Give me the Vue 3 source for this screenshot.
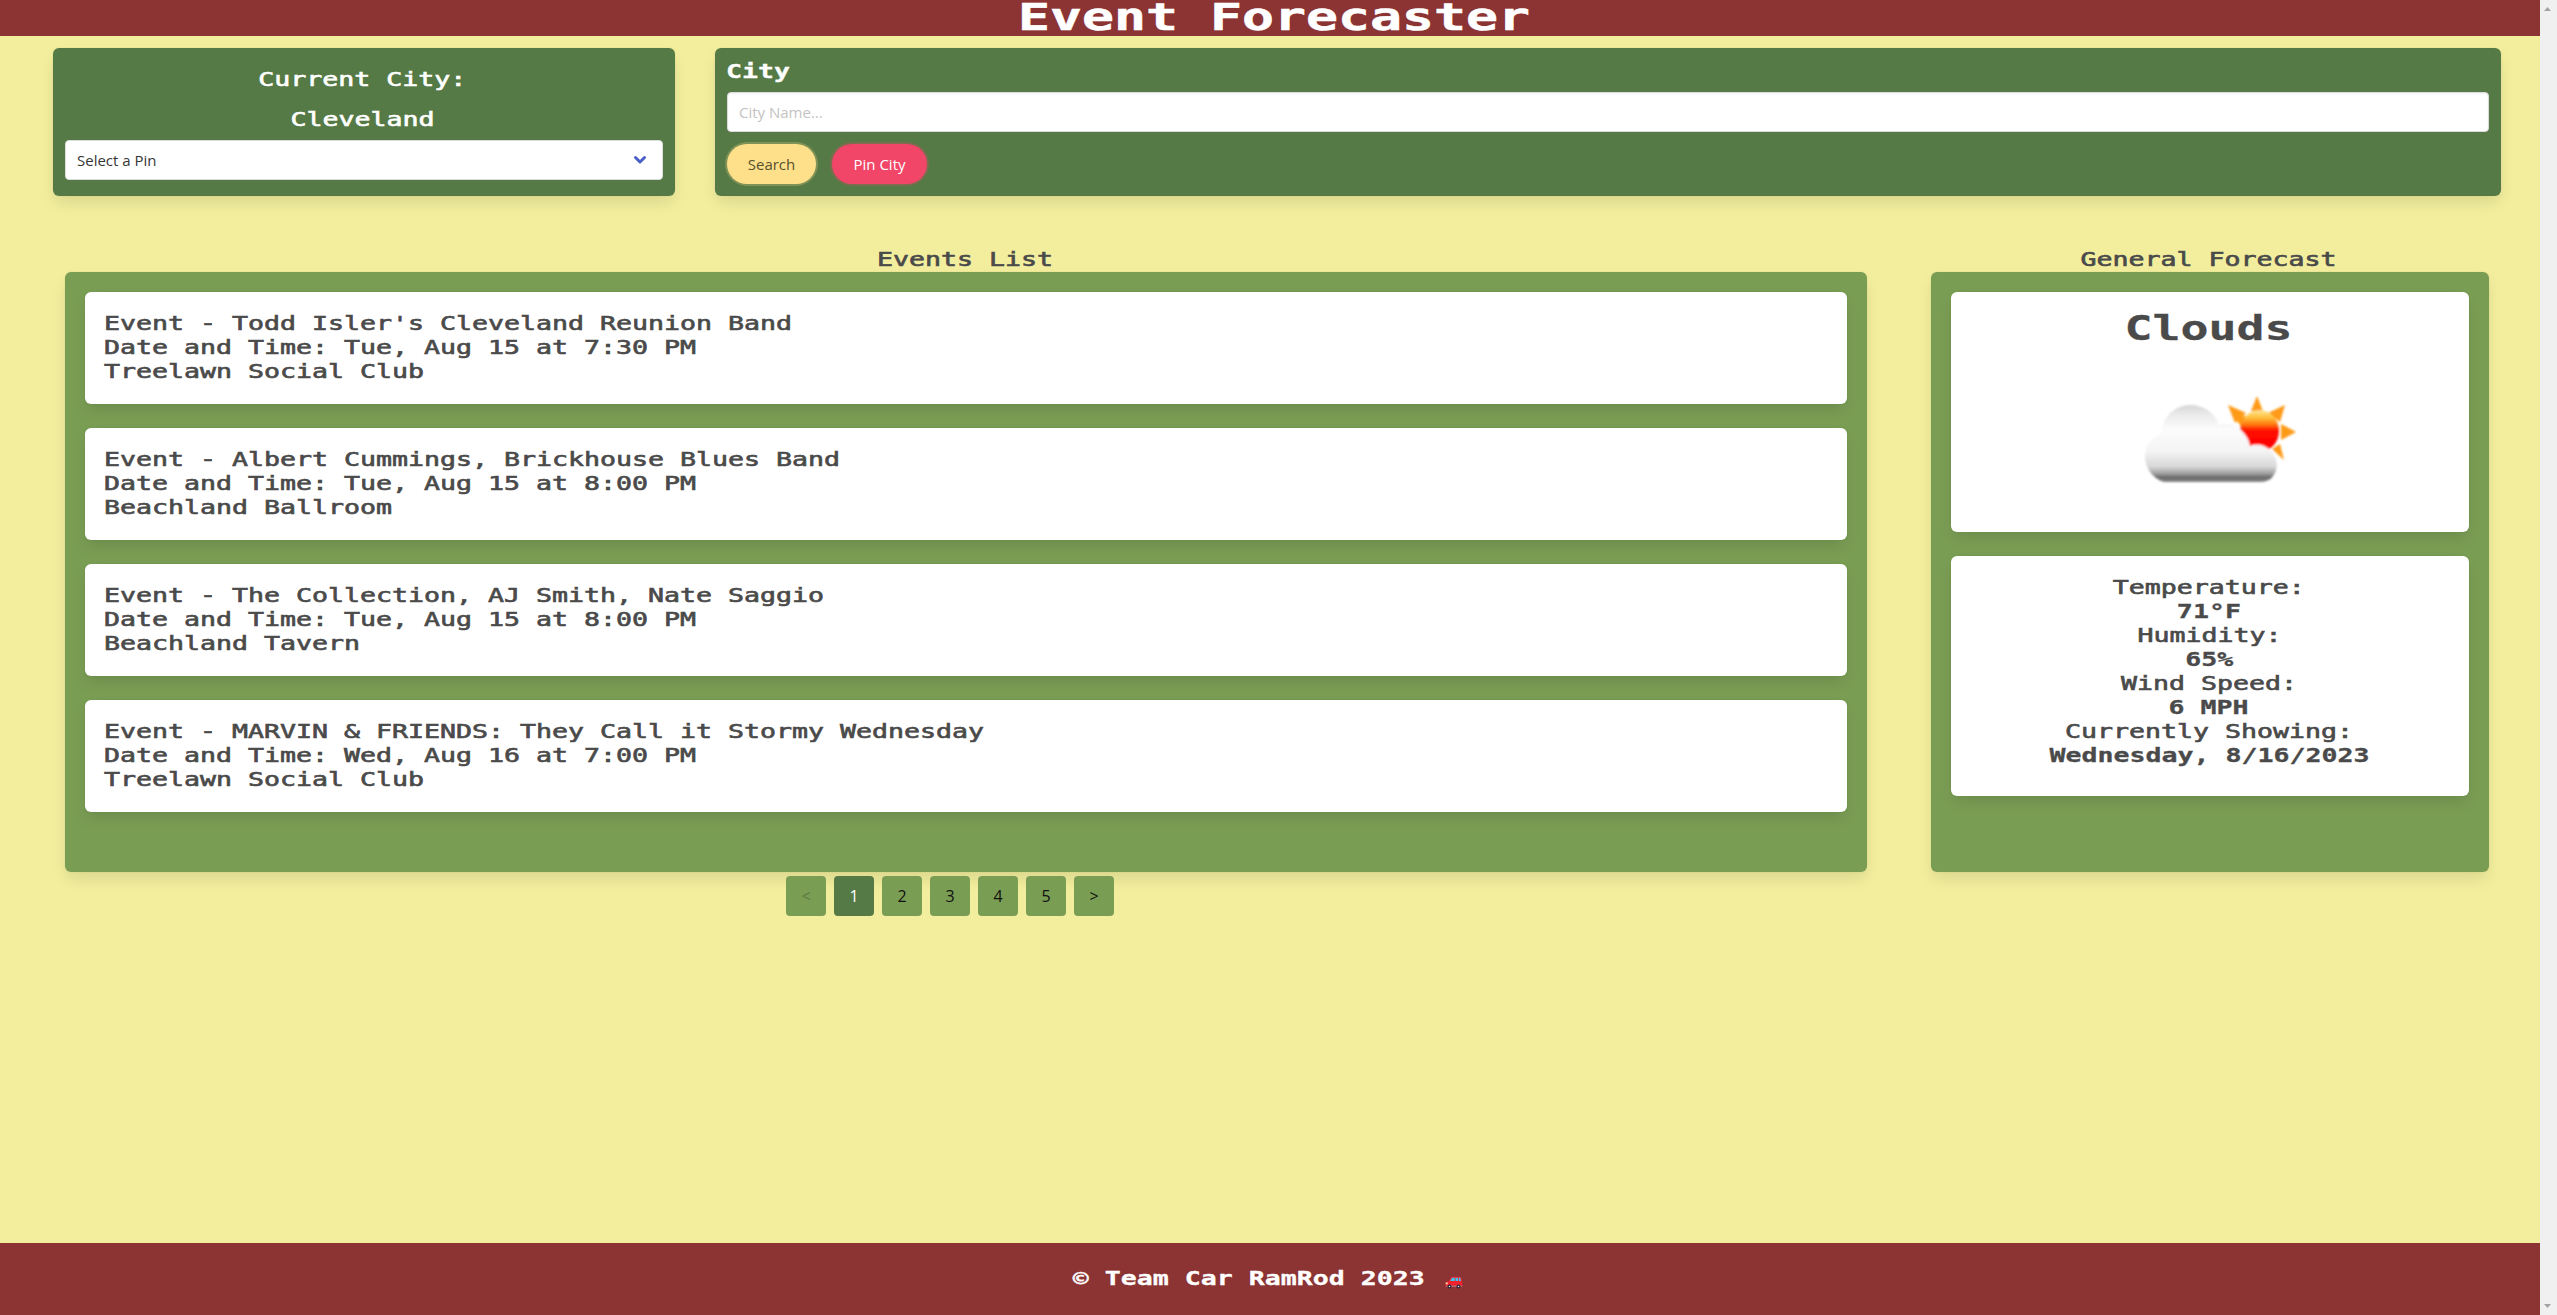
<script setup>
const events = [
  { name: "Todd Isler's Cleveland Reunion Band", time: 'Tue, Aug 15 at 7:30 PM', venue: 'Treelawn Social Club' },
  { name: 'Albert Cummings, Brickhouse Blues Band', time: 'Tue, Aug 15 at 8:00 PM', venue: 'Beachland Ballroom' },
  { name: 'The Collection, AJ Smith, Nate Saggio', time: 'Tue, Aug 15 at 8:00 PM', venue: 'Beachland Tavern' },
  { name: 'MARVIN & FRIENDS: They Call it Stormy Wednesday', time: 'Wed, Aug 16 at 7:00 PM', venue: 'Treelawn Social Club' },
]
const forecast = [
  { label: 'Temperature:', value: '71°F' },
  { label: 'Humidity:', value: '65%' },
  { label: 'Wind Speed:', value: '6 MPH' },
  { label: 'Currently Showing:', value: 'Wednesday, 8/16/2023' },
]
const pages = ['<', '1', '2', '3', '4', '5', '>']
</script>

<template>
  <div class="window">
    <div class="page">
      <header class="masthead"><h1 class="px title">Event Forecaster</h1></header>

      <section class="controls">
        <div class="panel current">
          <p class="px">Current City:</p>
          <p class="px">Cleveland</p>
          <div class="select">
            <span>Select a Pin</span>
            <svg width="14" height="10" viewBox="0 0 14 10"><path d="M2.5 2.5 L7 7 L11.5 2.5" fill="none" stroke="#485fc7" stroke-width="3" stroke-linecap="round" stroke-linejoin="round" /></svg>
          </div>
        </div>
        <div class="panel search">
          <label class="px left bold">City</label>
          <div class="input">City Name...</div>
          <div class="buttons">
            <button class="warning">Search</button>
            <button class="danger">Pin City</button>
          </div>
        </div>
      </section>

      <main class="content">
        <section class="events">
          <h2 class="px">Events List</h2>
          <div class="board">
            <article v-for="e in events" :key="e.name" class="card event">
              <p class="px left">Event - {{ e.name }}</p>
              <p class="px left">Date and Time: {{ e.time }}</p>
              <p class="px left">{{ e.venue }}</p>
            </article>
          </div>
          <nav class="pages">
            <span v-for="p in pages" :key="p" class="page-link" :class="{ current: p === '1', disabled: p === '<' }">{{ p }}</span>
          </nav>
        </section>

        <section class="forecast">
          <h2 class="px">General Forecast</h2>
          <div class="board">
            <article class="card weather">
              <p class="px sky">Clouds</p>
              <svg class="icon" width="160" height="96" viewBox="0 0 160 96">
                <defs>
                  <linearGradient id="cloud" gradientUnits="userSpaceOnUse" x1="0" y1="9" x2="0" y2="86">
                    <stop offset="0" stop-color="#d6d6d6" />
                    <stop offset=".13" stop-color="#ebebeb" />
                    <stop offset=".32" stop-color="#fcfcfc" />
                    <stop offset=".6" stop-color="#f4f4f4" />
                    <stop offset=".8" stop-color="#d8d8d8" />
                    <stop offset=".89" stop-color="#a0a0a0" />
                    <stop offset=".94" stop-color="#6a6a6a" />
                    <stop offset="1" stop-color="#888888" />
                  </linearGradient>
                  <linearGradient id="sun" x1="0" y1="0" x2="0" y2="1">
                    <stop offset="0" stop-color="#ffe69a" />
                    <stop offset=".18" stop-color="#ffc13b" />
                    <stop offset=".34" stop-color="#ff7a10" />
                    <stop offset=".5" stop-color="#ff0a00" />
                    <stop offset="1" stop-color="#ff0000" />
                  </linearGradient>
                  <filter id="soft"><feGaussianBlur stdDeviation=".9" /></filter>
                </defs>
                <g filter="url(#soft)">
                  <g fill="#ff9a14">
                    <path d="M113 0 L119 15 H107 Z" />
                    <path d="M141 9 L136 26 L124 17 Z" />
                    <path d="M152 36 L137 44 V28 Z" />
                    <path d="M140 64 L128 53 L136 48 Z" />
                    <path d="M84 9 L102 17 L91 27 Z" />
                    <path d="M92 24 L101 19 V35 Z" />
                  </g>
                  <ellipse cx="115.500" cy="35" rx="19.500" ry="21" fill="url(#sun)" />
                  <path d="M20 86 C9 83 1 72 1 60 C1 49 9 41 18 37 C18 21 31 9 46 9 C60 9 71 17 75 29 C80 27 88 27 93 31 C99 35 105 42 106 50 C113 47 121 49 126 54 C132 60 134 68 132 74 C130 81 125 86 117 86 Z" fill="url(#cloud)" />
                </g>
              </svg>
            </article>
            <article class="card details">
              <template v-for="f in forecast" :key="f.label">
                <p class="px">{{ f.label }}</p>
                <p class="px bold">{{ f.value }}</p>
              </template>
            </article>
          </div>
        </section>
      </main>

      <footer class="footer">
        <span class="px bold">© Team Car RamRod 2023</span>
        <svg class="car" width="18" height="13" viewBox="0 0 18 13">
          <path d="M.5 11 V7.200 Q.7 5.800 3.800 5 L6 1.500 Q6.500 .7 8 .7 H14.500 Q16.200 .8 16.600 2.500 L17.300 6 V11 Z" fill="#f0232c" />
          <path d="M5.200 5 L7 1.800 H9.800 V5 Z M10.600 1.800 H13.200 V5 H10.600 Z M14 1.800 H15.400 L16 5 H14 Z" fill="#3fc0f0" />
          <rect x=".7" y="6.500" width="2" height="1.800" fill="#ffe0b0" />
          <path d="M1 10.200 H17" stroke="#8d8d98" />
          <circle cx="4.500" cy="10.500" r="2" fill="#2c2438" /><circle cx="13.500" cy="10.500" r="2" fill="#2c2438" />
          <circle cx="4.500" cy="10.500" r=".8" fill="#ddd" /><circle cx="13.500" cy="10.500" r=".8" fill="#ddd" />
        </svg>
      </footer>
    </div>
    <div class="scrollbar">
      <svg width="7" height="5" viewBox="0 0 7 5"><path d="M3.5 0 L7 4 H0 Z" fill="#a3a3a3" /></svg>
      <svg width="7" height="5" viewBox="0 0 7 5"><path d="M0 0 H7 L3.5 4 Z" fill="#a3a3a3" /></svg>
    </div>
  </div>
</template>

<style>
body { margin: 0; overflow: hidden; }
</style>

<style scoped>
* { box-sizing: border-box; margin: 0; padding: 0; }
.window { display: flex; width: 2557px; height: 1315px; overflow: hidden; font-family: "Open Sans", "Noto Sans", sans-serif; font-size: 15px; color: #4a4a4a; }
.page { width: 2540px; display: flex; flex-direction: column; background: #f2ee9d; }
.scrollbar { width: 17px; background: #f0f0f0; display: flex; flex-direction: column; justify-content: space-between; align-items: center; padding: 7px 2px 6px 0; }

/* wide, retro terminal lettering */
.px {
  display: block; width: max-content; white-space: pre;
  font-family: "DejaVu Sans Mono", monospace; font-size: 19px; font-weight: 400; line-height: 24px; height: 24px;
  transform: translate(-1px, -1px) scaleX(1.3988); transform-origin: 50% 50%; -webkit-text-stroke: 0.6px currentColor;
}
.px.left { transform-origin: 0 50%; }
.px.bold { font-weight: 700; -webkit-text-stroke: 0.3px currentColor; }

.masthead { height: 36px; background: #8c3333; color: #fff; display: flex; justify-content: center; padding-left: 11px; }
.px.title { font-size: 38px; font-weight: 700; line-height: 36px; height: 36px; -webkit-text-stroke: 0.5px currentColor; }

.controls { display: flex; gap: 40px; padding: 12px 39px 0 53px; }
.panel { height: 148px; padding: 12px; border-radius: 6px; background: #557a46; color: #fff; }
.panel, .board, .card { box-shadow: 0 8px 16px -2px rgba(10, 10, 10, .1), 0 0 0 1px rgba(10, 10, 10, .02); }
.panel.current { width: 622px; display: flex; flex-direction: column; align-items: center; padding-top: 20px; }
.panel.current .px { margin-right: 2px; }
.panel.current .px:nth-child(2) { margin: 16px 2px 8px 0; }
.panel.search { flex: 1; }
.select, .input { height: 40px; border: 1px solid #dbdbdb; border-radius: 4px; background: #fff; display: flex; align-items: center; }
.select { width: 598px; justify-content: space-between; padding: 0 15px 0 11px; color: #363636; }
.input { margin-top: 8px; padding: 0 11px; color: #c3c3c3; box-shadow: inset 0 1px 2px rgba(10, 10, 10, .05); }
.buttons { display: flex; gap: 16px; margin-top: 12px; }
.buttons button { height: 40px; border: 0; border-radius: 20px; font: inherit; }
.warning { width: 89px; background: #ffe08a; color: #55502f; box-shadow: 0 0 0 2px rgba(255, 224, 138, .25); }
.danger { width: 95px; background: #f14668; color: #fff; box-shadow: 0 0 0 2px rgba(241, 70, 104, .25); }

.content { flex: 1; display: flex; gap: 64px; padding: 52px 51px 0 65px; }
.events { width: 1802px; display: flex; flex-direction: column; align-items: center; }
.forecast { width: 558px; display: flex; flex-direction: column; align-items: center; }
.board { width: 100%; height: 600px; padding: 20px; border-radius: 6px; background: #7a9d54; display: flex; flex-direction: column; gap: 24px; }
.card { border-radius: 6px; background: #fff; padding: 20px; }
.event { height: 112px; }
.weather, .details { height: 240px; display: flex; flex-direction: column; align-items: center; }
.px.sky { font-size: 34px; font-weight: 700; line-height: 32px; height: 32px; transform: translateX(-2px) scaleX(1.368); -webkit-text-stroke: 0.3px currentColor; }
.icon { margin: 52px 0 0 28px; }
.pages { display: flex; gap: 8px; margin-top: 4px; padding-right: 32px; }
.page-link { width: 40px; height: 40px; border-radius: 4px; background: #7a9d54; color: #111; display: flex; align-items: center; justify-content: center; font-size: 16px; }
.page-link.current { background: #557a46; color: #fff; }
.page-link.disabled { color: #5c7841; }

.footer { height: 72px; background: #8c3333; color: #fff; display: flex; justify-content: center; padding: 24px 0 0 47px; }
.car { margin: 9px 0 0 70px; }
</style>
